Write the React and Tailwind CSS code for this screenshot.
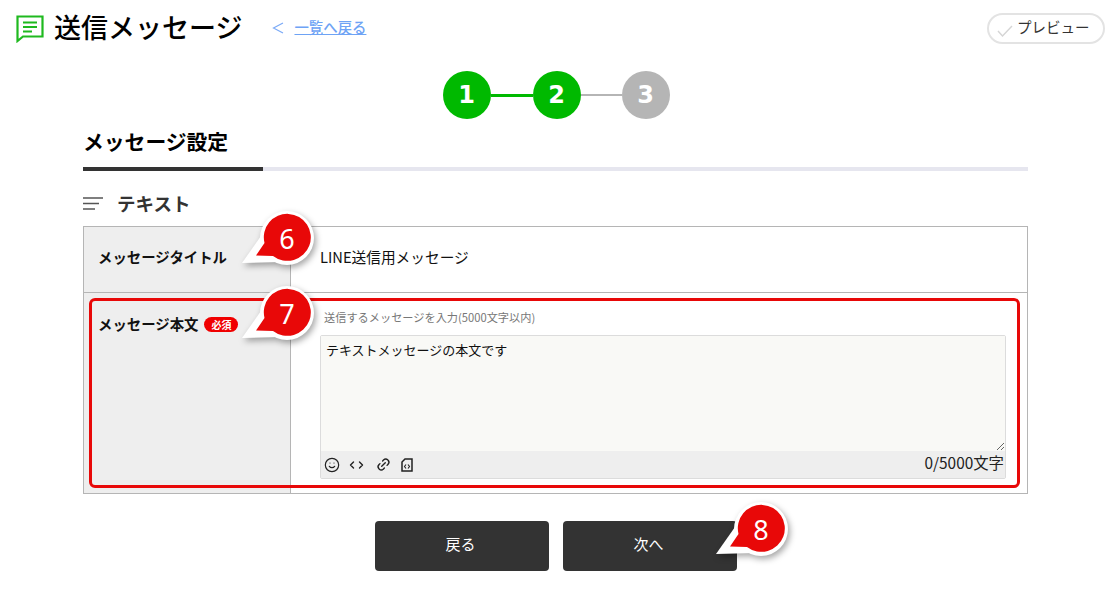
import { Smile, ChevronLeft, ChevronRight, Link2 } from "lucide-react";

function Callout({ n, className }) {
  return (
    <div className={`absolute w-[100px] h-[70px] ${className}`}>
      <svg viewBox="-60 -32 100 70" className="absolute inset-0 w-[100px] h-[70px] overflow-visible drop-shadow-[2px_3px_3px_rgba(0,0,0,0.35)]">
        <circle r="27" fill="#fff" />
        <path d="M-26 -2 L-45 25 L-6 24 Z" fill="#fff" />
        <path d="M-22.5 5 L-31 17.5 L-14 18 A23.5 23.5 0 1 0 -22.5 5 Z" fill="#e80808" />
      </svg>
      <span className="absolute left-[40px] top-[13px] w-[40px] h-[40px] flex items-center justify-center text-white text-[27px] font-['Noto_Sans',sans-serif]">
        {n}
      </span>
    </div>
  );
}

function Step({ n, active }) {
  return (
    <div className={`w-12 h-12 rounded-full flex items-center justify-center text-white text-[24px] font-bold font-['DejaVu_Sans',sans-serif] ${active ? "bg-[#00b900]" : "bg-[#b5b5b5]"}`}>
      {n}
    </div>
  );
}

export default function App() {
  return (
    <div className="relative w-[1109px] h-[596px] overflow-hidden bg-white text-[#111] font-['Noto_Sans_CJK_JP',sans-serif]">
      {/* header */}
      <header className="flex items-center h-[55px] pl-4 pr-[4px]">
        <svg width="28" height="28" viewBox="0 0 28 28" fill="none" stroke="#1fb91f" strokeWidth="2.2" className="mr-[10px] mt-[2px]">
          <path d="M1.5 1.5 H26.5 V21.5 H7 L1.5 26 Z" />
          <path d="M7 7.5 H21 M7 12 H21 M7 16.5 H16" />
        </svg>
        <h1 className="text-[27px] leading-none font-medium text-black pb-[3px]">送信メッセージ</h1>
        <svg width="12" height="14" viewBox="0 0 12 14" fill="none" stroke="#7baaf7" strokeWidth="1.2" className="ml-[30px]">
          <path d="M11 2 L1.5 7 L11 12" />
        </svg>
        <a href="#" className="ml-[10px] text-[14.4px] font-medium text-[#6ea3f5] underline pb-[1px]">一覧へ戻る</a>
        <button className="ml-auto w-[118px] h-[31px] rounded-full border-2 border-[#e3e3e3] flex items-center pl-[8px] pb-[3px] text-[14.5px] text-[#333] mt-[2px]">
          <svg width="16" height="12" viewBox="0 0 16 12" fill="none" stroke="#d5d5d5" strokeWidth="1.4" className="mr-[4px] mt-[8px]">
            <path d="M1 6 L5.5 11 L15 1" />
          </svg>
          プレビュー
        </button>
      </header>

      {/* stepper */}
      <div className="flex items-center justify-center mt-4 pl-[3px]">
        <Step n="1" active />
        <div className="w-[42px] h-[3px] bg-[#00b900]" />
        <Step n="2" active />
        <div className="w-[41px] h-[2px] bg-[#b5b5b5]" />
        <Step n="3" />
      </div>

      <main className="mx-[83px] w-[945px]">
        {/* tab */}
        <div className="mt-[9px] h-[39px] text-[20.8px] leading-[27px] font-bold text-black">メッセージ設定</div>
        <div className="h-1 bg-[#e6e6ef]">
          <div className="w-[180px] h-1 bg-[#333]" />
        </div>

        {/* section title */}
        <div className="flex items-center h-[55px] pt-[10px]">
          <svg width="20" height="15" viewBox="0 0 20 15" fill="none" stroke="#555" strokeWidth="1.4">
            <path d="M0 2 H20 M0 7.5 H16 M0 13 H12" />
          </svg>
          <h2 className="ml-[14px] text-[18.5px] font-bold text-[#333]">テキスト</h2>
        </div>

        {/* form table */}
        <div className="border border-[#b5b5b5] h-[268px] flex flex-col">
          <div className="flex h-[66px] border-b border-[#b5b5b5] shrink-0">
            <div className="w-[207px] bg-[#eeeeee] border-r border-[#b5b5b5] flex items-center pl-[14px] pb-[5px] text-[14.4px] font-bold">
              メッセージタイトル
            </div>
            <div className="flex items-center pl-[29px] pb-[5px] text-[14.7px]">LINE送信用メッセージ</div>
          </div>
          <div className="flex flex-1">
            <div className="w-[207px] bg-[#eeeeee] border-r border-[#b5b5b5] pl-[14px] pt-[19px] text-[14.4px] font-bold flex items-start">
              <span className="leading-[24px]">メッセージ本文</span>
              <span className="ml-[6px] mt-[5px] w-[34px] h-[15px] rounded-full bg-[#f00000] text-white text-[10px] leading-[15px] text-center">必須</span>
            </div>
            <div className="pl-[29px] pt-[15px]">
              <p className="pl-[4px] text-[11.2px] leading-[18px] text-[#777]">送信するメッセージを入力(5000文字以内)</p>
              <div className="mt-[9px] w-[686px] h-[144px] rounded-[2px] border border-[#dcdcdc] flex flex-col">
                <textarea
                  readOnly
                  defaultValue="テキストメッセージの本文です"
                  className="block w-full h-[115px] resize-y bg-[#f9f9f6] px-[5px] py-[3px] text-[13px] leading-[22px] outline-none"
                />
                <div className="flex items-center flex-1 bg-[#eeeeee] pl-[3px] pr-[1px]">
                  <Smile size={16} strokeWidth={1.8} className="text-[#222]" />
                  <span className="ml-[6px] flex items-center text-[#222]">
                    <ChevronLeft size={12} strokeWidth={2.8} />
                    <ChevronRight size={12} strokeWidth={2.8} className="ml-[-3px]" />
                  </span>
                  <Link2 size={15} strokeWidth={2.2} className="ml-[9px] -rotate-45 text-[#222]" />
                  <svg width="12" height="14" viewBox="0 0 12 14" fill="none" stroke="#222" strokeWidth="1.5" className="ml-[10px]">
                    <path d="M4 1 H11 V13 H1 V4 Z" />
                    <path d="M5 6.5 L3.5 8.5 L5 10.5 M7 6.5 L8.5 8.5 L7 10.5" strokeWidth="1.1" />
                  </svg>
                  <span className="ml-auto text-[15.4px] pb-[3px] text-[#222]">0/5000文字</span>
                </div>
              </div>
            </div>
          </div>
        </div>

        {/* buttons */}
        <div className="flex justify-center gap-[14px] mt-[27px]">
          <button className="w-[174px] h-[50px] rounded-[4px] bg-[#333] text-white text-[15px] pb-[4px] pr-[2px]">戻る</button>
          <button className="w-[174px] h-[50px] rounded-[4px] bg-[#333] text-white text-[15px] pb-[4px] pr-[2px]">次へ</button>
        </div>
      </main>

      {/* annotation overlays */}
      <div className="absolute left-[89px] top-[298px] w-[931px] h-[190px] rounded-[6px] border-[3px] border-[#e80808] pointer-events-none" />
      <Callout n="6" className="left-[227px] top-[206px]" />
      <Callout n="7" className="left-[227px] top-[281px]" />
      <Callout n="8" className="left-[701px] top-[497px]" />
    </div>
  );
}
